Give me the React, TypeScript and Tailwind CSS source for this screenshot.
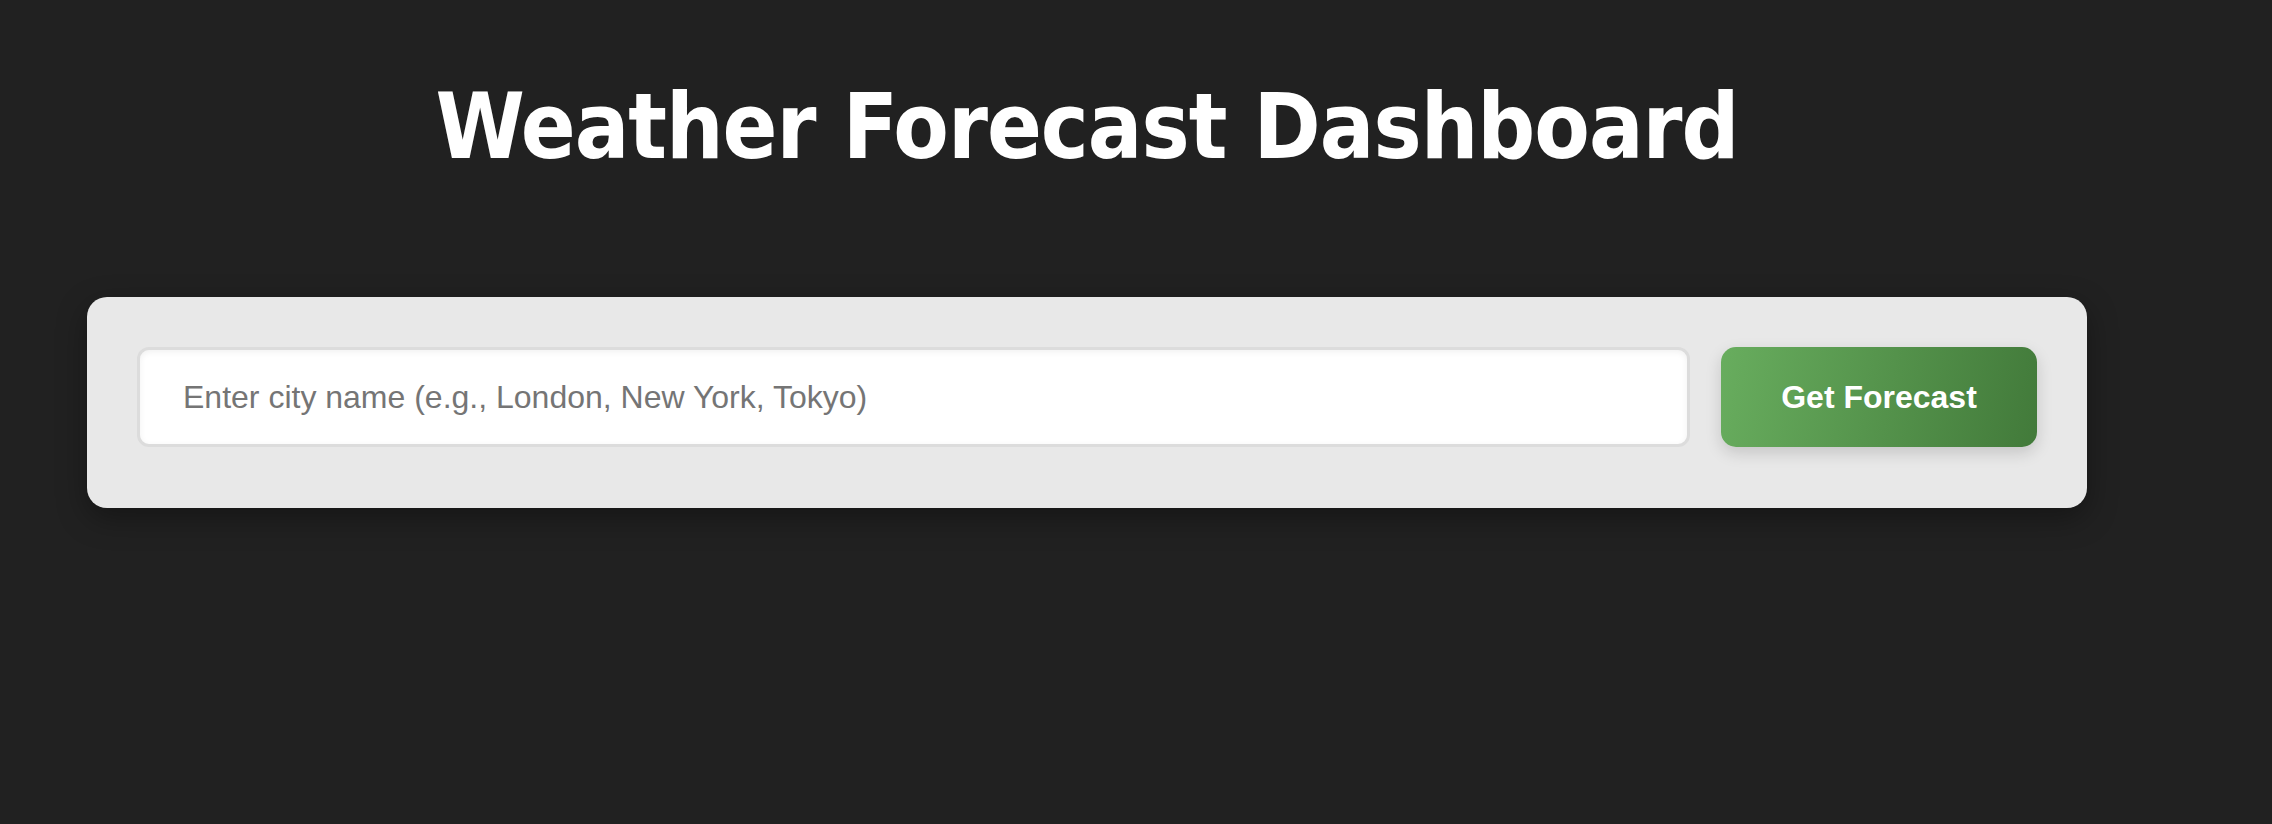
export default function App() {
  return (
    <div className="min-h-screen bg-[#212121]">
      <div className="w-[2000px] ml-[87px] pt-[72px]">
        <h1 className="text-center text-[90px] leading-[110px] tracking-[-1px] font-bold text-white [font-family:'DejaVu_Sans_Condensed','DejaVu_Sans',sans-serif]">
          Weather Forecast Dashboard
        </h1>
        <div className="mt-[115px] rounded-[20px] bg-[#e8e8e8] px-[50px] pt-[50px] pb-[61px] shadow-[0_10px_30px_rgba(0,0,0,0.35)]">
          <div className="flex gap-[31px]">
            <input
              type="text"
              placeholder="Enter city name (e.g., London, New York, Tokyo)"
              className="h-[100px] flex-1 rounded-[12px] border-[3px] border-[#dcdcdc] bg-white px-[43px] text-[32px] text-[#333] placeholder:text-[#757575] shadow-[inset_0_2px_6px_rgba(0,0,0,0.06)] outline-none [font-family:'Liberation_Sans',Arial,sans-serif]"
            />
            <button className="h-[100px] w-[316px] rounded-[15px] bg-[linear-gradient(100deg,#68ad5e,#427a3a)] text-[32px] font-bold text-white shadow-[0_6px_16px_rgba(0,0,0,0.15)] [font-family:'Liberation_Sans',Arial,sans-serif]">
              Get Forecast
            </button>
          </div>
        </div>
      </div>
    </div>
  )
}
